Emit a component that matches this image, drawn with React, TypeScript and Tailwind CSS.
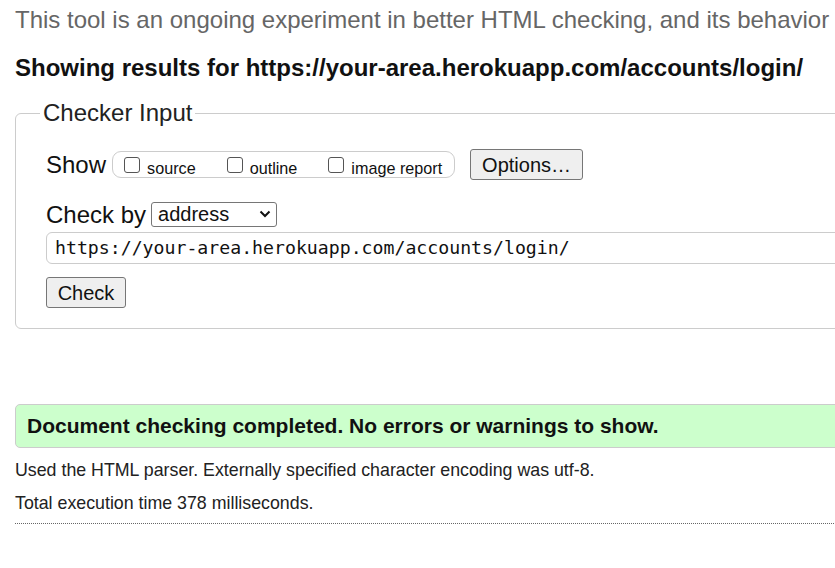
import { useState } from 'react'

function Box({ label }: { label: string }) {
  return (
    <label className="inline-flex items-center">
      <span className="inline-block h-[16px] w-[16px] rounded-[3px] border border-[#555] bg-white" />
      <span className="relative top-[3px] ml-[7px] text-[16.2px] leading-[20px]">{label}</span>
    </label>
  )
}

export default function App() {
  const [mode, setMode] = useState('address')
  return (
    <div className="h-[568px] w-[835px] overflow-hidden bg-white font-['Liberation_Sans',Arial,sans-serif] text-[#111]">
      <div className="w-[1000px] pl-[15px]">
        <p className="whitespace-nowrap pt-[6px] text-[24px] leading-[28px] text-[#666]">
          This tool is an ongoing experiment in better HTML checking, and its behavior remains subject to change
        </p>
        <h2 className="mt-[20px] whitespace-nowrap text-[24px] font-bold leading-[28px] text-[#111]">
          Showing results for https://your-area.herokuapp.com/accounts/login/
        </h2>

        <fieldset className="mt-[17px] rounded-[6px] border border-[#ccc] px-0 pb-[20px] pt-0">
          <legend className="ml-[24px] px-[3px] text-[24px] leading-[28px] text-[#222]">Checker Input</legend>

          <div className="pl-[30px]">
            <div className="mt-[22px] flex h-[31px] items-center">
              <span className="text-[24px] leading-[28px]">Show</span>
              <div className="ml-[6px] flex h-[27px] w-[343px] items-center gap-[31px] rounded-[9px] border border-[#ccc] pl-[11px]">
                <Box label="source" />
                <Box label="outline" />
                <Box label="image report" />
              </div>
              <button className="ml-[15px] h-[31px] w-[113px] rounded-[3px] border border-[#767676] bg-[#efefef] text-[20px] leading-[24px]">
                Options…
              </button>
            </div>

            <div className="mt-[21px] flex h-[28px] items-center">
              <span className="text-[24px] leading-[28px]">Check by</span>
              <div className="relative ml-[5px]">
                <select
                  value={mode}
                  onChange={(e) => setMode(e.target.value)}
                  className="h-[25px] w-[126px] appearance-none rounded-[3px] border border-[#767676] bg-white pl-[6px] text-[20px] leading-[22px]"
                >
                  <option value="address">address</option>
                  <option value="file">file upload</option>
                  <option value="text">text input</option>
                </select>
                <svg className="pointer-events-none absolute right-[6px] top-[8px]" width="12" height="9" viewBox="0 0 12 9">
                  <path d="M1.5 1.5 L6 6 L10.5 1.5" fill="none" stroke="#111" strokeWidth="2" />
                </svg>
              </div>
            </div>

            <div className="mt-[3px] flex h-[32px] w-[900px] items-center rounded-[6px] border border-[#ccc] pl-[8px] font-['DejaVu_Sans_Mono',monospace] text-[18.2px]">
              https://your-area.herokuapp.com/accounts/login/
            </div>

            <button className="mt-[13px] h-[31px] w-[80px] rounded-[3px] border border-[#767676] bg-[#efefef] text-[20px] leading-[24px]">
              Check
            </button>
          </div>
        </fieldset>

        <div className="mt-[75px] flex h-[44px] items-center rounded-[5px] border border-[#ccc] bg-[#ccffcc] pl-[11px] text-[21px] font-bold">
          Document checking completed. No errors or warnings to show.
        </div>

        <p className="mt-[11px] text-[17.8px] leading-[22px] text-[#222]">
          Used the HTML parser. Externally specified character encoding was utf-8.
        </p>
        <p className="mt-[11px] text-[17.8px] leading-[22px] text-[#222]">Total execution time 378 milliseconds.</p>
        <div className="mt-[9px] border-t border-dotted border-[#666]" />
      </div>
    </div>
  )
}
